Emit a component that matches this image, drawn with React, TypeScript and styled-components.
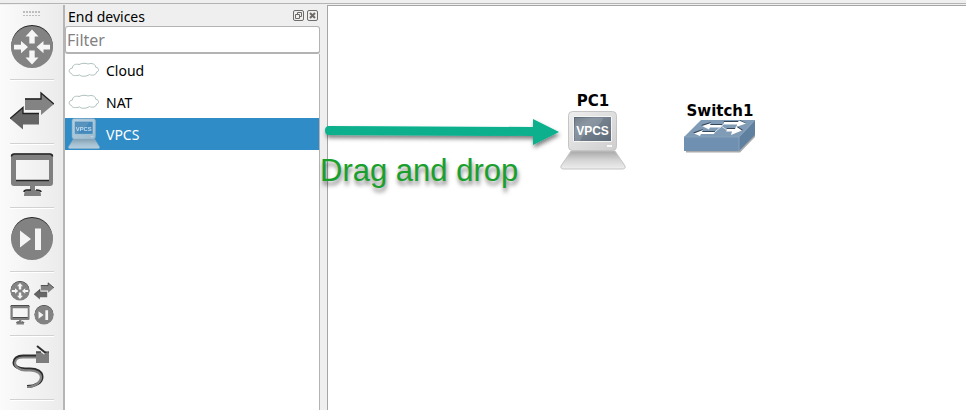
import React, { useState } from "react";
import styled, { createGlobalStyle } from "styled-components";

const GlobalStyle = createGlobalStyle`
  * { box-sizing: border-box; }
  body { margin: 0; background: #efefef; color: #000; font-family: "Noto Sans", "Open Sans", sans-serif; font-size: 14px; overflow: hidden; }
  button, input { font: inherit; color: inherit; margin: 0; padding: 0; }
  svg { display: block; }
`;

const Window = styled.div`
  position: relative;
  display: flex;
  flex-direction: column;
  height: 100vh;
`;

const TopEdge = styled.div`
  flex: none;
  height: 5px;
  border-top: 3px solid #efefef;
  background: linear-gradient(#b4b4b4 0 1px, #efefef 1px);
`;

const Workspace = styled.div`
  flex: 1;
  min-height: 0;
  display: flex;
`;

const Toolbar = styled.nav`
  flex: none;
  width: 65px;
  padding: 6px 9px 0 10px;
  overflow: hidden;
  background: linear-gradient(90deg, #fbfbfb, #ebebeb);
  border-right: 2px solid #b5b5b5;
`;

const Grip = styled.div`
  width: 18px;
  height: 5px;
  margin: 0 auto;
  background: radial-gradient(circle at 1px 1px, #bdbdbd 0 1px, transparent 1px) 0 0 / 3px 4px;
`;

const ToolGroup = styled.div`
  height: 64px;
  padding-bottom: 1px;
  display: flex;
  align-items: center;
  justify-content: center;
  border-bottom: 1px solid #d2d2d2;
  box-shadow: 0 1px #fff;
`;

const ToolButton = styled.button`
  border: 0;
  background: none;
`;

const Dock = styled.aside`
  flex: none;
  width: 255px;
  display: flex;
  flex-direction: column;
`;

const DockTitle = styled.header`
  height: 21px;
  display: flex;
  align-items: center;
  gap: 3px;
  padding: 0 2px 0 3px;
`;

const Heading = styled.h2`
  flex: 1;
  margin: 0;
  padding-top: 2px;
  font-size: 14px;
  font-weight: 400;
  line-height: 20px;
`;

const TitleButton = styled.button`
  width: 11px;
  height: 11px;
  border: 0;
  background: none;
`;

const FilterInput = styled.input`
  width: 100%;
  height: 28px;
  padding: 1px 2px 0 1px;
  border: 1px solid #b3b3b3;
  border-bottom-width: 2px;
  border-radius: 3px;
  background: #fff;
  font-size: 16px;
  outline: 0;
  &::placeholder { color: #828282; opacity: 1; }
`;

const DeviceList = styled.ul`
  flex: 1;
  margin: 0;
  padding: 0;
  list-style: none;
  background: #fff;
  border-right: 1px solid #b3b3b3;
`;

const DeviceButton = styled.button<{ $selected: boolean }>`
  display: flex;
  align-items: center;
  gap: 6px;
  width: 100%;
  height: 32px;
  padding-left: 3px;
  border: 0;
  text-align: left;
  background: ${(p) => (p.$selected ? "#308cc6" : "transparent")};
  color: ${(p) => (p.$selected ? "#fff" : "#000")};
`;

const Canvas = styled.main`
  position: relative;
  flex: 1;
  margin-left: 7px;
  background: #fff;
  border: solid #a5a5a5;
  border-width: 1px 0 0 1px;
`;

const Node = styled.figure<{ $x: number; $y: number }>`
  position: absolute;
  left: ${(p) => p.$x}px;
  top: ${(p) => p.$y}px;
  margin: 0;
  display: flex;
  flex-direction: column;
  align-items: center;
`;

const NodeLabel = styled.figcaption`
  font: bold 15px/18px "DejaVu Sans", Verdana, sans-serif;
`;

const ArrowNote = styled.div`
  position: absolute;
  left: 320px;
  top: 112px;
  pointer-events: none;
`;

const TextNote = styled.p`
  position: absolute;
  left: 320px;
  top: 153px;
  margin: 0;
  color: #19a02c;
  font: 31px/36px "Liberation Sans", Arial, sans-serif;
  text-shadow: 1px 4px 4px rgba(0, 0, 0, 0.5);
  pointer-events: none;
`;

type Size = { size?: number };

const RouterIcon = ({ size = 44 }: Size) => (
  <svg width={size} height={size} viewBox="0 0 44 44" aria-hidden="true">
    <circle cx="22" cy="20.700" r="20.700" fill="#252525" />
    <circle cx="22" cy="22" r="21" fill="#838383" />
    <path d="M22 4.500l6.500 7h-3.800v7h-5.400v-7h-3.800zM22 39.500l6.500-7h-3.800v-7h-5.400v7h-3.800zM18 22l-7-6v3.800H4v4.600h7v3.800zM26.500 22l7-6v3.800H40v4.600h-6.500v3.800z" fill="#f6f6f6" />
  </svg>
);

const SwitchIcon = ({ size = 44 }: Size) => (
  <svg width={size} height={size} viewBox="0 0 44 44" aria-hidden="true">
    <path d="M15 9.500h16V4l13 11-13 11v-5H15z" fill="#838383" />
    <path d="M15 10h16V4l13 11" fill="none" stroke="#202020" strokeWidth="1.300" />
    <path d="M29 24.500H13V18.500L0 29.500 13 40.500V35.500h16z" fill="#666" />
    <path d="M29 24.500H13V18.500L0 29.500" fill="none" stroke="#202020" strokeWidth="1.300" />
  </svg>
);

const MonitorIcon = ({ size = 44 }: Size) => (
  <svg width={size} height={size} viewBox="0 0 44 44" aria-hidden="true">
    <path fillRule="evenodd" d="M4 .5h36q3 0 3 3V30q0 3-3 3H25v4h3q3 0 3 6H14q0-6 3-6h3v-4H4q-3 0-3-3V3.500q0-3 3-3zM6 7v20h33V7z" fill="#808080" />
    <path d="M1.500 3.500Q1.500 1 4.500 1h35q3 0 3 2.500M6 27.500h33M14 39q0-2 3-2h4M26 37q5 0 5 2" fill="none" stroke="#252525" strokeWidth="1.500" />
  </svg>
);

const SkipIcon = ({ size = 44 }: Size) => (
  <svg width={size} height={size} viewBox="0 0 44 44" aria-hidden="true">
    <circle cx="22" cy="20.500" r="20.500" fill="#252525" />
    <circle cx="22" cy="22" r="21" fill="#828282" />
    <path d="M10 13.500l11 8.500-11 8.500zM25 11.500h6V33h-6z" fill="#f5f5f5" />
  </svg>
);

const AllGrid = styled.span`
  display: grid;
  grid-template-columns: 20px 20px;
  gap: 4px;
`;

const CableIcon = () => (
  <svg width="44" height="44" viewBox="0 0 44 44" aria-hidden="true">
    <g fill="none" strokeLinejoin="round">
      <path d="M26 11H13C7 11 4 14 4 17.500S8 24 15 24h5c7 0 12 3 12 8s-6 9.500-15 9.500" stroke="#2c2c2c" strokeWidth="3" />
      <path d="M26 12.500H13C8 12.500 5 15 5 18s3 7 10 7.300h5c6 0 11 3 11 7s-5 9.500-14 9.700" stroke="#858585" strokeWidth="2.200" />
    </g>
    <path d="M26 6.500h4l4 3 5-3V18H26z" fill="#7d7d7d" />
    <path d="M27 1l10 8" fill="none" stroke="#303030" strokeWidth="2" />
    <path d="M26 7h5M35 7h4" stroke="#303030" />
    <path d="M34 8l5 0v4z" fill="#7d7d7d" />
  </svg>
);

const CloudIcon = () => (
  <svg width="32" height="32" viewBox="0 0 32 32" aria-hidden="true">
    <path d="M3.500 19.500C.500 19 0 14.500 4.500 14 4 11 8 9.500 11 10.500 14 9 18 9 20 10 24 8.500 28 10.500 27.500 13 31.500 14 31.500 17.500 28.500 18 28.500 21 24 22 21.500 20.500 18 23 13 22.500 11.500 21 8 22 4 22 3.500 19.500z" fill="#fff" stroke="#aebfbe" />
  </svg>
);

const VpcIcon = ({ small = false }: { small?: boolean }) => (
  <svg width={small ? 32 : 66} height={small ? 32 : 62} viewBox="0 0 66 62" preserveAspectRatio="none" opacity={small ? 0.7 : 1} aria-hidden="true">
    <defs>
      <linearGradient id="case" x2="1" y2="1"><stop stopColor="#eee" /><stop offset="1" stopColor="#cecece" /></linearGradient>
      <linearGradient id="base" x2="0" y2="1"><stop stopColor="#a8a8a8" /><stop offset=".5" stopColor="#d4d4d4" /><stop offset="1" stopColor="#eee" /></linearGradient>
      <linearGradient id="screen" x2="1" y2="1"><stop stopColor="#53606e" /><stop offset=".3" stopColor="#7b8794" /><stop offset="1" stopColor="#5d6a78" /></linearGradient>
    </defs>
    <path d="M11 41h44l10 15q1 3-3 3H4q-4 0-3-3z" fill="url(#base)" stroke="#c4c4c4" />
    <rect x="8.500" y="1.500" width="48" height="39" rx="4" fill="url(#case)" stroke="#c5c5c5" />
    <path d="M13.500 6.500h38v25h-38z" fill={small ? "#4d88b8" : "url(#screen)"} stroke="#f5f5f5" />
    <path d="M15 8h28c-4 13-17 8-23 23h-5z" fill="#aebac5" opacity=".3" />
    <text x="32.500" y="24.500" textAnchor="middle" fill="#fff" fontFamily="Liberation Sans, sans-serif" fontWeight="700" fontSize="12">VPCS</text>
    <path d="M47 36h5" stroke="#f8f8f8" strokeWidth="2" />
  </svg>
);

const SwitchDevice = () => (
  <svg width="72" height="34" viewBox="0 0 72 34" aria-hidden="true">
    <path d="M2 31V32.500H56L71 17V14z" fill="#aaa" />
    <path d="M0 17L17 0h54L55 17z" fill="#7f9bb6" />
    <path d="M0 17h55v14H0z" fill="#7090b2" />
    <path d="M55 17L71 0v15L55 31z" fill="#60809f" />
    <path d="M0 17h55L71 0M55 17v14" fill="none" stroke="#86a1bc" />
    <path d="M38 4H26l1-2L17 5l8 4 1-2h11zM31 11H18l1-2L9 12.500 16 15l1-2h13zM40 1h15l1-1 6 3-10 3 1-2H39zM43 8h9l1-2 6 4-11 4 1-3h-7z" fill="#34465a" />
    <path d="M38 5H26l1-2L18 6l7 3.500L26 7.500h11zM31 12H18l1-2-9 3.500 6 2.500 1-2h13zM40 2h14l1-1.500L62 3.500 52 7l1-2.500H39zM43 9h8l1-2.500L58 10.500 47 15l1-3.500h-6z" fill="#fff" />
    <path d="M31 12l9-8M37 6l6 4" stroke="#d8e1e9" />
  </svg>
);

const tools = [
  { name: "Routers", icon: <RouterIcon /> },
  { name: "Switches", icon: <SwitchIcon /> },
  { name: "End devices", icon: <MonitorIcon /> },
  { name: "Security devices", icon: <SkipIcon /> },
  { name: "All devices", icon: <AllGrid><RouterIcon size={20} /><SwitchIcon size={20} /><MonitorIcon size={20} /><SkipIcon size={20} /></AllGrid> },
  { name: "Add a link", icon: <CableIcon /> },
];

const devices = [
  { name: "Cloud", icon: <CloudIcon /> },
  { name: "NAT", icon: <CloudIcon /> },
  { name: "VPCS", icon: <VpcIcon small /> },
];

export default function App() {
  const [filter, setFilter] = useState("");
  const [selected, setSelected] = useState("VPCS");
  return (
    <>
      <GlobalStyle />
      <Window>
        <TopEdge />
        <Workspace>
          <Toolbar aria-label="Devices">
            <Grip />
            {tools.map((tool) => (
              <ToolGroup key={tool.name}><ToolButton aria-label={tool.name}>{tool.icon}</ToolButton></ToolGroup>
            ))}
          </Toolbar>
          <Dock>
            <DockTitle>
              <Heading>End devices</Heading>
              <TitleButton aria-label="Float">
                <svg width="11" height="11" viewBox="0 0 11 11" fill="none" stroke="#6e6b68"><rect x=".5" y=".5" width="10" height="10" rx="1.500" /><path d="M4.500 4V2.500h4v4H7M2.500 4.500h4v4h-4z" /></svg>
              </TitleButton>
              <TitleButton aria-label="Close">
                <svg width="11" height="11" viewBox="0 0 11 11" fill="none" stroke="#6e6b68"><rect x=".5" y=".5" width="10" height="10" rx="1.500" /><path d="M3 3l5 5M8 3L3 8" strokeWidth="2" /></svg>
              </TitleButton>
            </DockTitle>
            <FilterInput aria-label="Filter" placeholder="Filter" value={filter} onChange={(e) => setFilter(e.target.value)} />
            <DeviceList>
              {devices.filter((d) => d.name.toLowerCase().includes(filter.toLowerCase())).map((d) => (
                <li key={d.name}>
                  <DeviceButton $selected={selected === d.name} onClick={() => setSelected(d.name)}>{d.icon}{d.name}</DeviceButton>
                </li>
              ))}
            </DeviceList>
          </Dock>
          <Canvas>
            <Node $x={232} $y={86}><NodeLabel>PC1</NodeLabel><VpcIcon /></Node>
            <Node $x={356} $y={96}><NodeLabel>Switch1</NodeLabel><SwitchDevice /></Node>
          </Canvas>
        </Workspace>
        <ArrowNote>
          <svg width="250" height="45" viewBox="0 0 250 45" aria-hidden="true">
            <defs><filter id="shade" x="-10%" y="-50%" width="120%" height="220%"><feDropShadow dx="1" dy="3" stdDeviation="2" floodOpacity=".5" /></filter></defs>
            <path d="M9 14L213 15V7L239 20 213 33V24L9 23Q5 23 5 18.500T9 14z" fill="#08b08d" filter="url(#shade)" />
          </svg>
        </ArrowNote>
        <TextNote>Drag and drop</TextNote>
      </Window>
    </>
  );
}
